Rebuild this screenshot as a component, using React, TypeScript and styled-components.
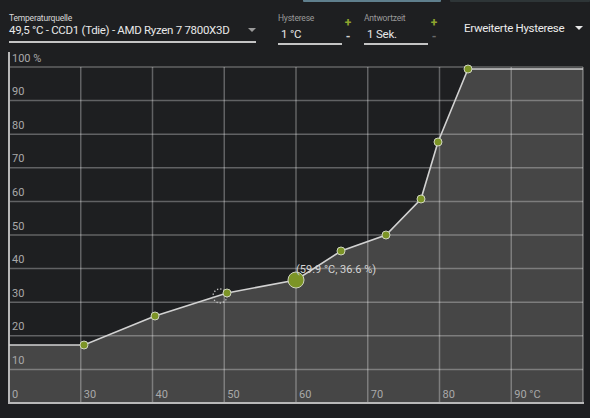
import React from "react";
import styled, { createGlobalStyle } from "styled-components";

const GlobalStyle = createGlobalStyle`
  html, body {
    margin: 0;
    padding: 0;
    background: #1e1f21;
    font-family: Roboto, "Liberation Sans", sans-serif;
    color: #e6e6e6;
    overflow: hidden;
  }
`;

const Page = styled.div`
  width: 590px;
  height: 418px;
  background: #1e1f21;
  display: flex;
  flex-direction: column;
`;

const TopStrip = styled.div`
  display: flex;
  height: 3px;
  padding-left: 303px;
  gap: 9px;
`;

const StripBar = styled.div<{ $color: string; $w: number }>`
  width: ${(p) => p.$w}px;
  height: 2px;
  background: ${(p) => p.$color};
  border-radius: 0 0 1px 1px;
`;

const Header = styled.div`
  display: flex;
  align-items: flex-start;
  height: 47px;
  padding-left: 9px;
`;

const SourceField = styled.div`
  width: 247px;
  margin-top: 10px;
  border-bottom: 2px solid #c4c4c4;
  margin-right: 22px;
`;

const FieldLabel = styled.div<{ $dim?: boolean }>`
  font-size: 8.5px;
  line-height: 10px;
  letter-spacing: -0.2px;
  color: ${(p) => (p.$dim ? "#9a9a9a" : "#d8d8d8")};
  white-space: nowrap;
`;

const SelectRow = styled.div`
  display: flex;
  align-items: center;
  justify-content: space-between;
  height: 14px;
  line-height: 14px;
  padding-bottom: 4px;
  font-size: 11.5px;
  letter-spacing: -0.3px;
  color: #e8e8e8;
  white-space: nowrap;
`;

const Caret = styled.span<{ $color?: string }>`
  display: inline-block;
  width: 0;
  height: 0;
  border-left: 4px solid transparent;
  border-right: 4px solid transparent;
  border-top: 4px solid ${(p) => p.$color ?? "#9a9a9a"};
  margin-right: 0;
`;

const NumberGroup = styled.div<{ $gap: number }>`
  display: flex;
  margin-top: 10px;
  margin-right: ${(p) => p.$gap}px;
`;

const NumberField = styled.div`
  width: 64px;
`;

const NumberValue = styled.div`
  font-size: 11.5px;
  line-height: 14px;
  height: 14px;
  padding: 4px 0 2px 3px;
  letter-spacing: -0.2px;
  color: #e8e8e8;
  border-bottom: 2px solid #c4c4c4;
  white-space: nowrap;
`;

const Stepper = styled.div`
  display: flex;
  flex-direction: column;
  align-items: center;
  gap: 2px;
  width: 12px;
  padding-top: 4px;
`;

const StepBtn = styled.span<{ $color: string }>`
  font-size: 12px;
  line-height: 12px;
  height: 12px;
  font-weight: 700;
  color: ${(p) => p.$color};
`;

const AdvancedToggle = styled.div`
  display: flex;
  align-items: center;
  gap: 11px;
  margin-top: 18px;
  font-size: 11.5px;
  line-height: 14px;
  letter-spacing: -0.3px;
  color: #ececec;
  white-space: nowrap;
`;

const ChartSvg = styled.svg`
  display: block;
  width: 590px;
  height: 368px;
`;

const X0 = 9;
const X1 = 583;
const Y100 = 67;
const Y0 = 403;
const ROW = (Y0 - Y100) / 10;
const COL = (X1 - X0) / 8;

const points: [number, number][] = [
  [84, 345],
  [155, 316],
  [227, 293],
  [296, 280],
  [341, 251],
  [386, 235],
  [421, 199],
  [438, 142],
  [468, 69],
];

const xLabels = ["0", "30", "40", "50", "60", "70", "80", "90 °C"];

function Chart() {
  const curve: [number, number][] = [[X0, 345], ...points, [X1, 69]];
  const line = curve.map(([x, y]) => `${x},${y}`).join(" ");
  const area = `${line} ${X1},${Y0} ${X0},${Y0}`;
  const rows = Array.from({ length: 10 }, (_, i) => Y0 - (i + 1) * ROW);
  const cols = Array.from({ length: 7 }, (_, i) => X0 + (i + 1) * COL);
  return (
    <ChartSvg viewBox="0 50 590 368">
      <polygon points={area} fill="#464646" />
      {rows.map((y) => (
        <line key={y} x1={X0} x2={X1} y1={y} y2={y} stroke="rgba(255,255,255,0.3)" strokeWidth={1.5} />
      ))}
      {cols.map((x) => (
        <line key={x} x1={x} x2={x} y1={Y100} y2={Y0} stroke="rgba(255,255,255,0.3)" strokeWidth={1.5} />
      ))}
      <line x1={X1} x2={X1} y1={Y100} y2={Y0} stroke="rgba(255,255,255,0.35)" strokeWidth={1.5} />
      <line x1={X0} x2={X0} y1={52} y2={Y0 + 1} stroke="#b8b8b8" strokeWidth={2} />
      <line x1={X0} x2={X1 + 1} y1={Y0} y2={Y0} stroke="#b8b8b8" strokeWidth={2} />
      <polyline points={line} fill="none" stroke="#d2d2d2" strokeWidth={1.6} />
      <g fontFamily="Roboto, 'Liberation Sans', sans-serif" fontSize={11} fill="#a9a9a9">
        <text x={12} y={Y100 - 5}>100 %</text>
        {rows.slice(0, 9).map((y, i) => (
          <text key={i} x={12} y={y - 5.5}>{(i + 1) * 10}</text>
        ))}
        <text x={12} y={Y0 - 5}>0</text>
        {xLabels.slice(1).map((t, i) => (
          <text key={t} x={cols[i] + 3} y={Y0 - 5}>{t}</text>
        ))}
      </g>
      <circle cx={220} cy={296} r={7} fill="none" stroke="#c4c4c4" strokeWidth={1.3} strokeDasharray="1.3 2" />
      {points.map(([x, y]) => (
        <circle key={x} cx={x} cy={y} r={x === 296 ? 8 : 4} fill="#7c9426" stroke="#cfd4c0" strokeWidth={1} />
      ))}
      <text x={296} y={273} fontFamily="Roboto, 'Liberation Sans', sans-serif" fontSize={11} fill="#d4d4d4">
        (59.9 °C, 36.6 %)
      </text>
    </ChartSvg>
  );
}

export default function App() {
  return (
    <>
      <GlobalStyle />
      <Page>
        <TopStrip>
          <StripBar $color="#5f7f8d" $w={138} />
          <StripBar $color="#2e3537" $w={140} />
        </TopStrip>
        <Header>
          <SourceField>
            <FieldLabel>Temperaturquelle</FieldLabel>
            <SelectRow>
              <span>49,5 °C - CCD1 (Tdie) - AMD Ryzen 7 7800X3D</span>
              <Caret />
            </SelectRow>
          </SourceField>
          <NumberGroup $gap={10}>
            <NumberField>
              <FieldLabel $dim>Hysterese</FieldLabel>
              <NumberValue>1 °C</NumberValue>
            </NumberField>
            <Stepper>
              <StepBtn $color="#8ea52e">+</StepBtn>
              <StepBtn $color="#d0d0d0">-</StepBtn>
            </Stepper>
          </NumberGroup>
          <NumberGroup $gap={24}>
            <NumberField>
              <FieldLabel $dim>Antwortzeit</FieldLabel>
              <NumberValue>1 Sek.</NumberValue>
            </NumberField>
            <Stepper>
              <StepBtn $color="#8ea52e">+</StepBtn>
              <StepBtn $color="#6a6a6a">-</StepBtn>
            </Stepper>
          </NumberGroup>
          <AdvancedToggle>
            <span>Erweiterte Hysterese</span>
            <Caret $color="#e8e8e8" />
          </AdvancedToggle>
        </Header>
        <Chart />
      </Page>
    </>
  );
}
